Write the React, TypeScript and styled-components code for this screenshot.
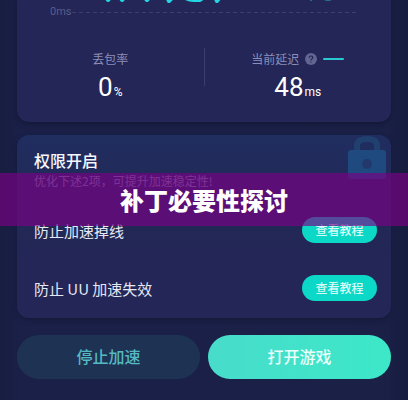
import React from "react";
import styled, { createGlobalStyle } from "styled-components";

const GlobalStyle = createGlobalStyle`
  * { box-sizing: border-box; }
  body {
    margin: 0;
    background: #191f44;
    font-family: "Noto Sans CJK SC", sans-serif;
    color: #e6e8f5;
  }
  button { font-family: inherit; border: 0; padding: 0; cursor: pointer; }
  h1, h2, p { margin: 0; }
`;

const Page = styled.main`
  position: relative;
  display: flex;
  flex-direction: column;
  min-height: 100vh;
  padding: 0 17px 21px;
  overflow: hidden;
  background: linear-gradient(90deg, #171e40, #1a2048 5%, #1a2046 95%, #161c3e);
`;

const StatsCard = styled.section`
  padding-bottom: 15px;
  border-radius: 0 0 12px 12px;
  background: #232656;
  box-shadow: 0 2px 5px #131836;
`;

const Chart = styled.div`
  display: flex;
  height: 48px;
  padding: 0 32px 0 33px;
`;

const AxisLabel = styled.span`
  width: 20px;
  font: 11px/24px Roboto, sans-serif;
  color: #5a5c89;
`;

const Plot = styled.svg`
  flex: 1;
  min-width: 0;
  height: 24px;
`;

const Stats = styled.div`
  display: grid;
  grid-template-columns: 1fr 1px 1fr;
`;

const Divider = styled.span`
  height: 38px;
  background: #3b3e6d;
`;

const Stat = styled.div`
  display: flex;
  flex-direction: column;
  align-items: center;
  padding-top: 2px;
`;

const StatLabel = styled.span`
  display: flex;
  align-items: center;
  gap: 6px;
  font-size: 12px;
  line-height: 18px;
  color: #8c8eb8;
`;

const Help = styled.svg`
  width: 12px;
  height: 12px;
`;

const Legend = styled.span`
  width: 21px;
  height: 2px;
  border-radius: 1px;
  background: #2cc8d2;
`;

const StatValue = styled.span`
  display: flex;
  align-items: baseline;
  gap: 1px;
  margin-top: 4px;
  font: 400 26px/30px Roboto, sans-serif;
  color: #fff;
`;

const Unit = styled.small`
  font-size: 12px;
`;

const PermissionCard = styled.section`
  position: relative;
  margin-top: 13px;
  padding: 13px 14px 1px 17px;
  border-radius: 12px;
  background: linear-gradient(180deg, #202d5f, #222956 45%, #232656 65%);
  box-shadow: 0 2px 5px #151a3a;
`;

const CardTitle = styled.h2`
  font-size: 16px;
  font-weight: 500;
  line-height: 24px;
  color: #f6f7fc;
`;

const CardNote = styled.p`
  font-size: 12px;
  line-height: 18px;
  color: #878ab4;
`;

const Lock = styled.svg`
  position: absolute;
  top: 0;
  right: 4px;
  width: 40px;
  height: 44px;
`;

const Rows = styled.div`
  display: grid;
  grid-auto-rows: 58px;
  margin-top: 11px;
`;

const Row = styled.div`
  display: flex;
  align-items: center;
  justify-content: space-between;
  font-size: 15px;
`;

const Tutorial = styled.button`
  width: 75px;
  height: 26px;
  border-radius: 13px;
  background: #0cd8c7;
  color: #d9fbf6;
  font-size: 12px;
  font-weight: 500;
  line-height: 24px;
`;

const Actions = styled.div`
  display: grid;
  grid-template-columns: 1fr 1fr;
  gap: 8px;
  margin-top: 17px;
`;

const Action = styled.button<{ $primary?: boolean }>`
  height: 44px;
  padding-bottom: 2px;
  border-radius: 22px;
  font-size: 16px;
  font-weight: 500;
  background: ${(p) => (p.$primary ? "linear-gradient(90deg, #48dccb, #3ce8c8)" : "#1e3353")};
  color: ${(p) => (p.$primary ? "#eafffb" : "#55b9c3")};
`;

const Banner = styled.div`
  position: absolute;
  top: 173px;
  left: 0;
  right: 0;
  height: 53px;
  display: flex;
  align-items: center;
  justify-content: center;
  background: rgba(123, 0, 133, 0.65);
`;

const BannerTitle = styled.h1`
  font-size: 24px;
  font-weight: 900;
  line-height: 36px;
  color: #fff;
`;

const permissions = ["防止加速掉线", "防止 UU 加速失效"];

export default function App() {
  return (
    <>
      <GlobalStyle />
      <Page>
        <StatsCard>
          <Chart>
            <AxisLabel>0ms</AxisLabel>
            <Plot viewBox="0 0 289 24" preserveAspectRatio="none" aria-hidden="true">
              <path d="M2 12.5H289" stroke="#3d406e" strokeDasharray="4 3" />
              <g fill="none" stroke="#23d5e5" strokeWidth="4" strokeLinecap="round" strokeLinejoin="round">
                <path d="M36 -3L38 0L41 -3M50 -3L52 0L55 -3M74 -3L77 0L80 -3M97 -3L99 1L103 -3M114 -3Q118 0 124 0H130L134 -3M145 -3L147 1L150 -3" />
                <path d="M241 -3V-1M253 -2Q258 0 263 -2" strokeWidth="3" stroke="#24b6cb" />
              </g>
            </Plot>
          </Chart>
          <Stats>
            <Stat>
              <StatLabel>丢包率</StatLabel>
              <StatValue>0<Unit>%</Unit></StatValue>
            </Stat>
            <Divider />
            <Stat>
              <StatLabel>
                当前延迟
                <Help viewBox="0 0 12 12" aria-hidden="true">
                  <circle cx="6" cy="6" r="6" fill="#62658f" />
                  <path d="M4.2 4.7Q4.3 3 6 3T7.8 4.6Q7.8 5.4 6.8 6T6 7.3M6 8.6V9.5" fill="none" stroke="#232656" strokeWidth="1.2" />
                </Help>
                <Legend />
              </StatLabel>
              <StatValue>48<Unit>ms</Unit></StatValue>
            </Stat>
          </Stats>
        </StatsCard>
        <PermissionCard>
          <Lock viewBox="0 0 40 44" aria-hidden="true">
            <path d="M10 17V11Q10 4 20 4T30 11V17" fill="none" stroke="#20406f" strokeWidth="6" />
            <rect x="1" y="15" width="38" height="29" rx="3" fill="#1f4a80" />
            <circle cx="20" cy="29" r="5" fill="#23396b" />
          </Lock>
          <CardTitle>权限开启</CardTitle>
          <CardNote>优化下述2项，可提升加速稳定性!</CardNote>
          <Rows>
            {permissions.map((name) => (
              <Row key={name}>
                <span>{name}</span>
                <Tutorial type="button" aria-label={`${name} 查看教程`}>查看教程</Tutorial>
              </Row>
            ))}
          </Rows>
        </PermissionCard>
        <Actions>
          <Action type="button">停止加速</Action>
          <Action type="button" $primary>打开游戏</Action>
        </Actions>
        <Banner>
          <BannerTitle>补丁必要性探讨</BannerTitle>
        </Banner>
      </Page>
    </>
  );
}
